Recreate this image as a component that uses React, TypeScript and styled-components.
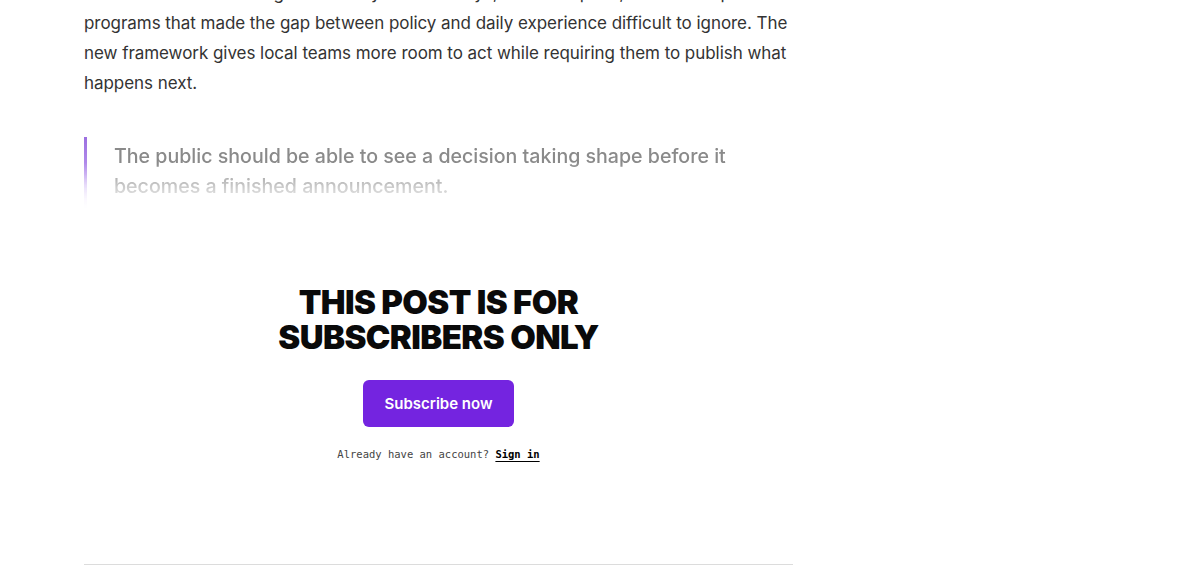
import React from 'react'
import styled, { createGlobalStyle } from 'styled-components'

const GlobalStyle = createGlobalStyle`
  html, body {
    margin: 0;
    padding: 0;
    background: #ffffff;
    overflow: hidden;
  }
  body {
    font-family: Inter, "Noto Sans", sans-serif;
  }
`

const Page = styled.main`
  width: 709px;
  margin: -22px 0 0 84px;
  display: flex;
  flex-direction: column;
`

const Paragraph = styled.p`
  margin: 0;
  font-size: 17px;
  line-height: 30px;
  color: #333333;
  letter-spacing: -0.05px;
`

const Quote = styled.blockquote`
  margin: 39px 0 0;
  padding: 4px 0 10px 27px;
  border-left: 3px solid transparent;
  border-image: linear-gradient(to bottom, #9b6ee0 0%, #b895ee 50%, rgba(220, 200, 250, 0) 100%) 1;
  font-size: 19.6px;
  font-weight: 500;
  line-height: 30px;
  color: #8a8a8a;
  -webkit-mask-image: linear-gradient(to bottom, #000 35%, rgba(0, 0, 0, 0.4) 70%, rgba(0, 0, 0, 0) 100%);
  mask-image: linear-gradient(to bottom, #000 35%, rgba(0, 0, 0, 0.4) 70%, rgba(0, 0, 0, 0) 100%);
`

const Paywall = styled.section`
  margin-top: 74px;
  display: flex;
  flex-direction: column;
  align-items: center;
  text-align: center;
`

const PaywallTitle = styled.h2`
  margin: 0;
  font-family: Inter, "Noto Sans", sans-serif;
  font-weight: 900;
  font-size: 33px;
  line-height: 35px;
  letter-spacing: -0.6px;
  text-transform: uppercase;
  color: #0a0a0a;
`

const SubscribeButton = styled.button`
  margin-top: 25px;
  width: 151px;
  height: 47px;
  border: none;
  border-radius: 6px;
  background: #7424e0;
  color: #ffffff;
  font-family: Inter, "Noto Sans", sans-serif;
  font-size: 15px;
  font-weight: 600;
  cursor: pointer;
`

const SignInNote = styled.p`
  margin: 21px 0 0;
  font-family: "DejaVu Sans Mono", "Liberation Mono", monospace;
  font-size: 10.5px;
  color: #444444;
`

const SignInLink = styled.a`
  color: #000000;
  font-weight: 700;
  text-decoration: underline;
  text-underline-offset: 3px;
`

const Divider = styled.hr`
  margin: 104px 0 0;
  border: none;
  border-top: 1px solid #dcdcdc;
  height: 0;
`

const App: React.FC = () => {
  return (
    <>
      <GlobalStyle />
      <Page>
        <Paragraph>
          Residents said the change followed years of delays, missed repairs, and stalled pilot
          programs that made the gap between policy and daily experience difficult to ignore. The new
          framework gives local teams more room to act while requiring them to publish what happens next.
        </Paragraph>

        <Quote>
          The public should be able to see a decision taking shape before it becomes a finished
          announcement.
        </Quote>

        <Paywall>
          <PaywallTitle>
            This post is for
            <br />
            subscribers only
          </PaywallTitle>
          <SubscribeButton>Subscribe now</SubscribeButton>
          <SignInNote>
            Already have an account? <SignInLink href="#">Sign in</SignInLink>
          </SignInNote>
        </Paywall>

        <Divider />
      </Page>
    </>
  )
}

export default App
